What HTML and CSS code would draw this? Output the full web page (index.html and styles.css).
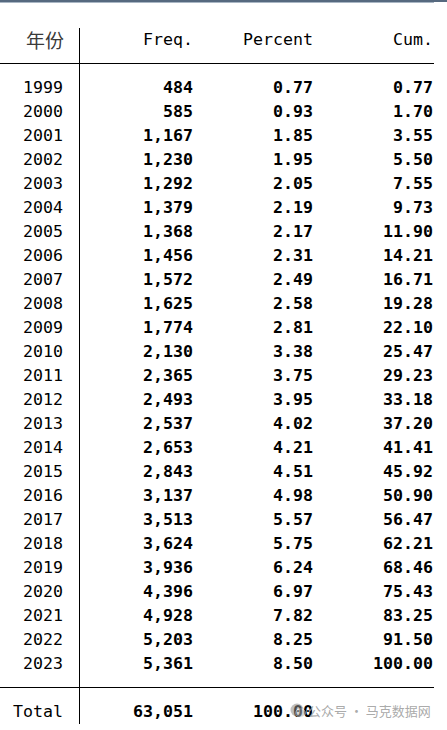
FILE: index.html
```html
<!doctype html>
<html lang="zh-CN">
  <head>
    <meta charset="UTF-8" />
    <meta name="viewport" content="width=device-width, initial-scale=1.0" />
    <title>tabulate 年份</title>
    <link rel="stylesheet" href="styles.css">
  </head>
  <body>
    <div class="window">
      <div class="tab">
        <!-- 表头 -->
        <div class="sec head">
          <div class="yr cjk">年份</div>
          <div class="v">Freq.</div>
          <div class="v">Percent</div>
          <div class="v">Cum.</div>
        </div>

        <!-- 数据 -->
        <div class="sec body">
          <div class="yr">1999</div><div class="v b">484</div><div class="v b">0.77</div><div class="v b">0.77</div>
          <div class="yr">2000</div><div class="v b">585</div><div class="v b">0.93</div><div class="v b">1.70</div>
          <div class="yr">2001</div><div class="v b">1,167</div><div class="v b">1.85</div><div class="v b">3.55</div>
          <div class="yr">2002</div><div class="v b">1,230</div><div class="v b">1.95</div><div class="v b">5.50</div>
          <div class="yr">2003</div><div class="v b">1,292</div><div class="v b">2.05</div><div class="v b">7.55</div>
          <div class="yr">2004</div><div class="v b">1,379</div><div class="v b">2.19</div><div class="v b">9.73</div>
          <div class="yr">2005</div><div class="v b">1,368</div><div class="v b">2.17</div><div class="v b">11.90</div>
          <div class="yr">2006</div><div class="v b">1,456</div><div class="v b">2.31</div><div class="v b">14.21</div>
          <div class="yr">2007</div><div class="v b">1,572</div><div class="v b">2.49</div><div class="v b">16.71</div>
          <div class="yr">2008</div><div class="v b">1,625</div><div class="v b">2.58</div><div class="v b">19.28</div>
          <div class="yr">2009</div><div class="v b">1,774</div><div class="v b">2.81</div><div class="v b">22.10</div>
          <div class="yr">2010</div><div class="v b">2,130</div><div class="v b">3.38</div><div class="v b">25.47</div>
          <div class="yr">2011</div><div class="v b">2,365</div><div class="v b">3.75</div><div class="v b">29.23</div>
          <div class="yr">2012</div><div class="v b">2,493</div><div class="v b">3.95</div><div class="v b">33.18</div>
          <div class="yr">2013</div><div class="v b">2,537</div><div class="v b">4.02</div><div class="v b">37.20</div>
          <div class="yr">2014</div><div class="v b">2,653</div><div class="v b">4.21</div><div class="v b">41.41</div>
          <div class="yr">2015</div><div class="v b">2,843</div><div class="v b">4.51</div><div class="v b">45.92</div>
          <div class="yr">2016</div><div class="v b">3,137</div><div class="v b">4.98</div><div class="v b">50.90</div>
          <div class="yr">2017</div><div class="v b">3,513</div><div class="v b">5.57</div><div class="v b">56.47</div>
          <div class="yr">2018</div><div class="v b">3,624</div><div class="v b">5.75</div><div class="v b">62.21</div>
          <div class="yr">2019</div><div class="v b">3,936</div><div class="v b">6.24</div><div class="v b">68.46</div>
          <div class="yr">2020</div><div class="v b">4,396</div><div class="v b">6.97</div><div class="v b">75.43</div>
          <div class="yr">2021</div><div class="v b">4,928</div><div class="v b">7.82</div><div class="v b">83.25</div>
          <div class="yr">2022</div><div class="v b">5,203</div><div class="v b">8.25</div><div class="v b">91.50</div>
          <div class="yr">2023</div><div class="v b">5,361</div><div class="v b">8.50</div><div class="v b">100.00</div>
        </div>

        <!-- 合计 -->
        <div class="sec total">
          <div class="yr">Total</div>
          <div class="v b">63,051</div>
          <div class="v b">100.00</div>
          <div class="v"></div>
          <div class="mark">
            <svg class="mark-icon" width="16" height="16" viewBox="0 0 16 16">
              <circle cx="7" cy="7" r="6.5" fill="#8c8c8c" />
              <ellipse cx="10.5" cy="10" rx="5" ry="4.2" fill="#b5b5b5" stroke="#fff" stroke-width="0.8" />
            </svg>
            <span>公众号 · 马克数据网</span>
          </div>
        </div>
      </div>
    </div>
  </body>
</html>
```

FILE: styles.css
```css
* {
  box-sizing: border-box;
  margin: 0;
  padding: 0;
}

body {
  background: #fff;
  color: #000;
  font-family: "DejaVu Sans Mono", "Liberation Mono", monospace;
  font-size: 16.6px;
  line-height: 24px;
}

/* 窗口顶部边框 */
.window {
  border-top: 2px solid #56697f;
  height: 730px;
  overflow: hidden;
}

.tab {
  border-top: 1px solid #a9b6c4;
  padding-top: 25px;
  width: 434px;
}

.sec {
  display: grid;
  grid-template-columns: 80px 113px 120px 120px;
  grid-auto-rows: 24px;
  width: 434px;
  /* 竖线 */
  background: linear-gradient(#000, #000) no-repeat 79px 0 / 1px 100%;
}

.head {
  padding-bottom: 11px;
  border-bottom: 1px solid #000;
}

.body {
  padding-top: 12px;
  padding-bottom: 11px;
  border-bottom: 1px solid #000;
}

.total {
  position: relative;
  padding-top: 12px;
}

.yr {
  text-align: right;
  padding-right: 17px;
  white-space: pre;
}

.v {
  text-align: right;
  white-space: pre;
}

.b {
  font-weight: bold;
}

.cjk {
  font-family: "Noto Sans CJK SC", sans-serif;
  font-size: 19px;
  color: #3a3a3a;
  padding-right: 16px;
}

/* 水印 */
.mark {
  position: absolute;
  left: 290px;
  top: 13px;
  display: flex;
  align-items: center;
  gap: 6px;
  font-family: "Noto Sans CJK SC", sans-serif;
  font-size: 13px;
  line-height: 20px;
  color: rgba(160, 160, 160, 0.9);
  white-space: nowrap;
}

.mark-icon {
  opacity: 0.55;
  margin-right: -4px;
}
```
